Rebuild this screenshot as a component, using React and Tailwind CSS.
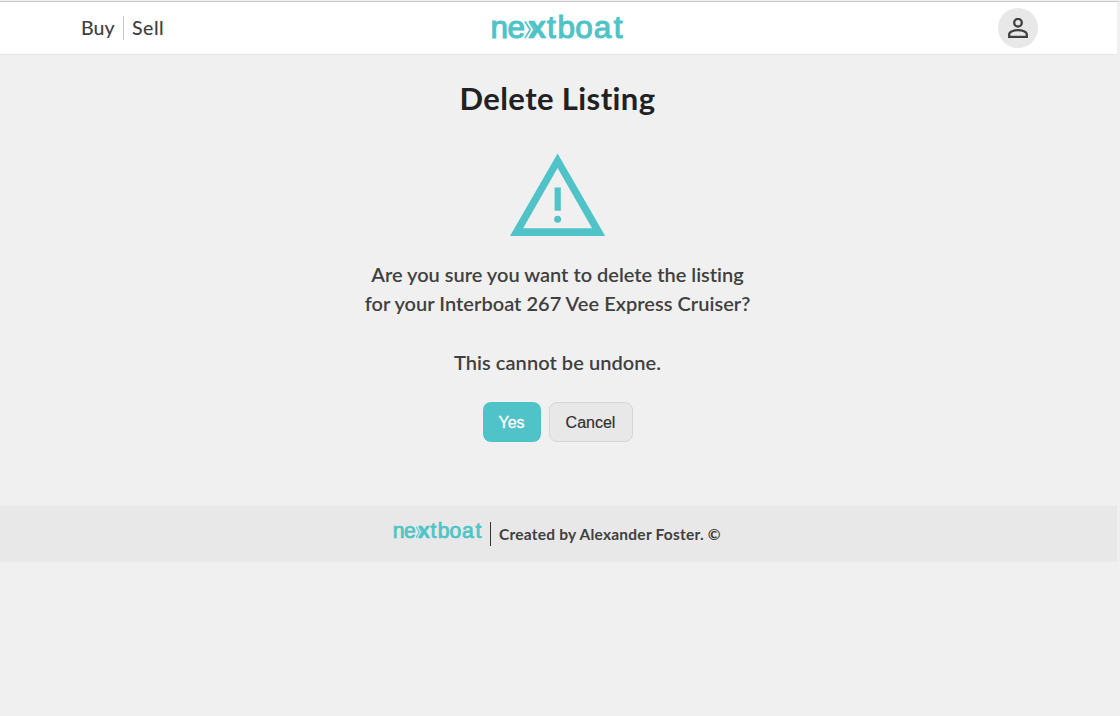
import React from "react";

function Logo({ className }) {
  return (
    <svg viewBox="0 -5 134 38" className={className} role="img" aria-label="nextboat">
      <g fill="#4fc3c7" stroke="#4fc3c7" strokeWidth="1.100" fontFamily="'Liberation Sans', Arial, sans-serif" fontSize="31.500">
        <text y="24.300" x="-0.500 16.500">ne</text>
        <text y="24.300" x="56 66.500 84.300 102.800 122.800">tboat</text>
        <text y="24.300" x="37.700" fontWeight="bold" strokeWidth="0.5">x</text>
      </g>
      <path d="M33 6.500l6 9.200-6 9.300" fill="none" stroke="#fff" strokeWidth="2.200" />
      <path d="M34 7.500l5.200 8.200-5.200 8.500M38 7.500l5.200 8.200-5.200 8.500" fill="none" stroke="#4fc3c7" strokeWidth="1.600" />
    </svg>
  );
}

function Header() {
  return (
    <div className="w-full pt-px">
      <div className="h-px w-[1119px] bg-[#c9c9c9]" />
      <header className="flex h-[53px] w-[1117px] items-center border-b border-[#e4e4e4] bg-white pl-[81px]">
        <nav className="flex w-[410px] items-center text-[19.500px] text-[#404040]">
          <a className="w-[42px] tracking-[0.1px]">Buy</a>
          <span className="h-6 w-px bg-[#c8c8c8]" />
          <a className="pl-2 tracking-[0.5px]">Sell</a>
        </nav>
        <Logo className="h-[38px] w-[134px]" />
        <button className="ml-[372.500px] flex size-10 items-center justify-center rounded-full bg-[#e8e8e8]" aria-label="Account">
          <svg viewBox="0 0 20 20" className="size-5" fill="none" stroke="#404040" strokeWidth="2.300">
            <circle cx="10" cy="4.700" r="3.800" />
            <path d="M1.200 18.800v-2.300C1.200 13.500 6 12.200 10 12.200s8.800 1.300 8.800 4.300v2.300z" />
          </svg>
        </button>
      </header>
    </div>
  );
}

function Warning() {
  return (
    <svg viewBox="0 0 96 84" className="mt-[35px] h-[84px] w-24" fill="#4fc3c7">
      <path fillRule="evenodd" d="M47.600 .5L0 83h95.200zM47.600 15L82.100 75.300h-69z" />
      <path d="M44.600 34.500h6.200v23.200h-6.200z" />
      <circle cx="47.600" cy="66.200" r="3.500" />
    </svg>
  );
}

export default function App() {
  return (
    <div className="min-h-screen w-full bg-[#f0f0f0] font-['Lato',sans-serif] font-medium text-[#404040] [font-variant-ligatures:none]">
      <Header />
      <main className="flex h-[451px] w-[1115px] flex-col items-center pt-[23px]">
        <h1 className="text-[31px] leading-10 font-bold tracking-[0.4px] whitespace-nowrap text-[#212123]">Delete Listing</h1>
        <Warning />
        <div className="mt-[23px] text-center text-[20px] leading-[29.300px] font-semibold whitespace-nowrap">
          <p>Are you sure you want to delete the listing</p>
          <p className="tracking-[0.03px]">for your Interboat 267 Vee Express Cruiser?</p>
          <p className="mt-[29px] tracking-[0.06px]">This cannot be undone.</p>
        </div>
        <div className="mt-[25px] flex gap-2 font-['Liberation_Sans',Arial,sans-serif] text-base font-normal">
          <button className="h-10 w-[58px] rounded-lg bg-[#4fc3c7] pt-0.5 text-white [-webkit-text-stroke:0.3px_white]">Yes</button>
          <button className="h-10 w-[84px] rounded-lg border border-[#d6d6d6] bg-[#e8e8e8] pt-0.5 text-[#303030] [-webkit-text-stroke:0.2px_#303030]">Cancel</button>
        </div>
      </main>
      <footer className="flex h-14 w-[1117px] items-center bg-[#e8e8e8] pl-[393px]">
        <Logo className="mb-[7px] h-[26px] w-[90px]" />
        <span className="ml-[7px] h-6 w-px bg-[#333]" />
        <p className="ml-2 text-[15.500px] leading-5 font-bold tracking-[0.23px] whitespace-nowrap">Created by Alexander Foster. ©</p>
      </footer>
    </div>
  );
}
